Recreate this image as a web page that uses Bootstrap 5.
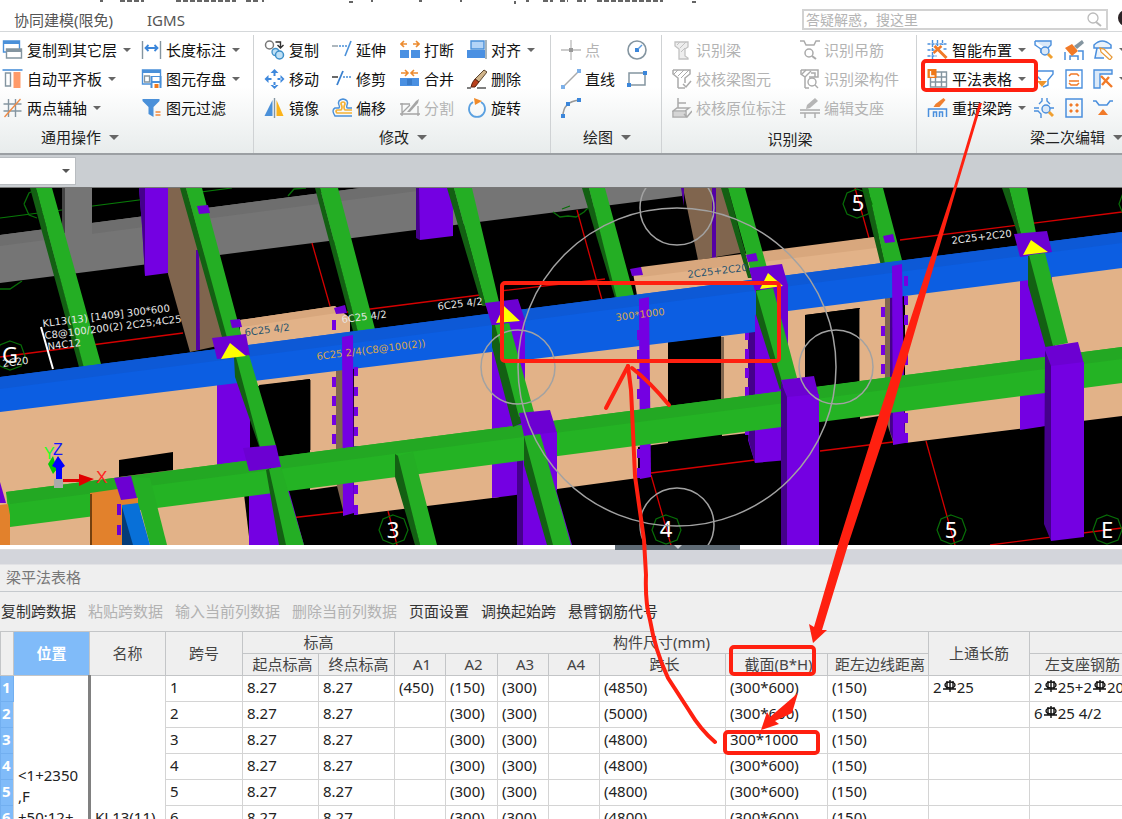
<!DOCTYPE html>
<html lang="zh-CN">
<head>
<meta charset="utf-8">
<meta name="viewport" content="width=device-width, initial-scale=1">
<title>梁平法表格</title>
<link href="https://cdn.jsdelivr.net/npm/bootstrap@5.3.0/dist/css/bootstrap.min.css" rel="stylesheet">
<style>
body{font-family:"Noto Sans","Noto Sans CJK SC",sans-serif;font-size:15px;line-height:20px;color:#222;background:#fff}
svg{flex:none}
.app{position:relative;height:100vh;overflow:hidden}
.topbar,.ribbon,.optbar,.scene,.grip,.split{flex:none}
.topbar{height:32px;border-bottom:1px solid #d5d8da;padding:4px 14px 0 14px;overflow:hidden}
.topbar nav{gap:34px;padding-top:6px}
.topbar a{color:#555;text-decoration:none}
.titlecut{position:absolute;left:0;top:0;width:100%}
.finder{width:306px;height:21px;border:2px solid #d2d2d2;margin-top:5px}
.finder input{border:0;outline:0;font-size:14px;line-height:16px;color:#888;padding:0 2px;background:none}
.finder input::placeholder{color:#b4b4b4}
.face{position:absolute;right:0;top:8px}
.ribbon{height:123px;background:linear-gradient(#fff 45%,#e8ecec);border-bottom:2px solid #9b9fa3;padding-top:3px;overflow:hidden}
.panelx{border-right:1px solid #cfd2d4}
.panelx:last-child{border:0}
.gridx{display:grid;grid-auto-rows:29px;align-items:center}
.w1{width:254px;padding-left:2px}.w1 .gridx{grid-template-columns:139px 1fr}
.w2{width:297px;padding-left:10px}.w2 .gridx{grid-template-columns:68px 68px 67px 1fr}
.w3{width:111px;padding-left:10px}.w3 .gridx{grid-template-columns:66px 1fr}
.w4{width:255px;padding-left:10px}.w4 .gridx{grid-template-columns:128px 1fr}
.w5{padding-left:10px}.w5 .gridx{grid-template-columns:107px 30px 29px 30px}
.tool{border:0;background:none;padding:0;display:flex;align-items:center;gap:4px;color:#111;white-space:nowrap;text-align:left}
.tool:disabled{color:#b3b3b3}
.cap{height:30px;display:flex;align-items:center;gap:8px;color:#222;border:0;background:none;padding:0;white-space:nowrap}
.w1 .cap{margin-left:39px}
.dd::after{content:"";border:4px solid transparent;border-top-color:#666;border-bottom:0;margin-left:2px}
.cap.dd::after{border-width:5px;border-bottom:0;margin:0}
.optbar{height:33px;background:#caced2;border-bottom:1px solid #777;padding-top:2px}
.combo{width:76px;height:28px;border:1px solid #b8bcc0;border-left:0;border-radius:0;background:#fff;appearance:none}
.combowrap{position:relative;width:76px}
.combowrap::after{content:"";position:absolute;right:6px;top:12px;border:4px solid transparent;border-top-color:#555;border-bottom:0}
.scene{display:block;width:100%;height:auto;background:#000}
.grip{height:5px;background:#fff;border-bottom:1px solid #ddd}
.grip span{display:block;width:125px;height:5px;margin-left:615px;background:#5f6b75}
.grip svg{display:block;margin:auto}
.split{height:15px;background:#d3d5db;border-bottom:1px solid #e2e2e5}
.dock{background:#efefef;flex:1 1 0;min-height:0;overflow:hidden}
.dtitle{height:27px;border-bottom:1px solid #c5c9cd;color:#777;padding:2px 6px}
.dtools{height:39px;padding:0 0 2px 1px;gap:12px}
.dtools button{border:0;background:none;padding:0;color:#333;white-space:nowrap}
.dtools button:disabled{color:#b2b2b2}
.span{table-layout:fixed;width:1131px;border-collapse:collapse;background:#fff}
.span th,.span td{border:1px solid #d4d4d4;padding:0 4px 3px;line-height:20px;white-space:nowrap;overflow:hidden}
.span thead th{height:22px;background:#efefef;border-color:#c3c5c7;font-weight:400;text-align:center;color:#444;padding:0 0 1px}
.span thead tr + tr th{padding:0 0 1px 4px}
.span thead th:nth-child(n).sel{background:#80bbf9;color:#fff;font-weight:700}
.span tbody tr{height:26px}
.span td{color:#222}
.span tbody th{background:#80bbf9;color:#fff;padding:0 1px 3px;font-weight:700;border-color:#72aff0}
.span td.loc{border-right:3px solid #808080;line-height:21px}
.marks{position:absolute;left:0;top:0;width:100%;pointer-events:none}
</style>
</head>
<body>
<svg width="0" height="0" class="position-absolute">
<defs>
<symbol id="copyf" viewBox="0 0 20 20"><path d="M1 1h16v11H1z" fill="#fff" stroke="#4a90d9" stroke-width="1.4"/><path d="M1 1h16v3H1z" fill="#4a90d9"/><path d="M4 9h15v9H4z" fill="#fff" stroke="#8495a0" stroke-width="1.4"/><path d="M4 9h15v3H4z" fill="#8495a0"/></symbol>
<symbol id="slab" viewBox="0 0 20 20"><path d="M0 1h20" stroke="#4a90d9" stroke-width="1.6"/><path d="M3 4h5v13H3z" fill="#fff" stroke="#8495a0" stroke-width="1.4"/><path d="M11 3h7v16h-7z" fill="#ff9b6a"/></symbol>
<symbol id="axis" viewBox="0 0 20 20"><path d="M6 1v18M13 1v18M1 6h18M1 13h18" stroke="#8495a0" stroke-width="1.4"/><path d="M2 19 18 1" stroke="#ef8a45" stroke-width="1.4"/></symbol>
<symbol id="dim" viewBox="0 0 20 20"><path d="M1 1v18M19 1v18" stroke="#8495a0" stroke-width="1.4"/><path d="M4 8h12M7 5 4 8l3 3M13 5l3 3-3 3" fill="none" stroke="#3b86da" stroke-width="1.8"/></symbol>
<symbol id="save" viewBox="0 0 20 20"><path d="M1 1h18v14H1z" fill="#fff" stroke="#4a90d9" stroke-width="1.4"/><path d="M1 1h18v3H1z" fill="#4a90d9"/><path d="M3 7h5v6H3z" fill="none" stroke="#8495a0" stroke-width="1.3"/><path d="M9 7h11v12H9z" fill="#4a90d9"/><path d="M11 8h7v4h-7z" fill="#fff"/><path d="M11 14h7v5h-7z" fill="#fff"/><path d="M13 15h4v4h-4z" fill="#f07a1c"/></symbol>
<symbol id="filt" viewBox="0 0 20 20"><path d="M1 1h17v2l-6 6v10l-5-3V9L1 3z" fill="#4a90d9"/><path d="M14 14h5M14 17h5" stroke="#f58a3c" stroke-width="1.5"/></symbol>
<symbol id="copy" viewBox="0 0 20 20"><circle cx="5" cy="5" r="4" fill="none" stroke="#777" stroke-width="1.5"/><path d="M11 2h5v5M13 5l3 3 3-3" fill="none" stroke="#333" stroke-width="1.4"/><circle cx="11" cy="12" r="3.500" fill="#bfe0f5" stroke="#3d8fc8" stroke-width="1.3"/><circle cx="15" cy="15" r="4" fill="#bfe0f5" stroke="#3d8fc8" stroke-width="1.5"/></symbol>
<symbol id="move" viewBox="0 0 20 20"><path d="M10 0l4 4H6zM10 20l4-4H6zM0 10l4-4v8zM20 10l-4-4v8zM9 3h2v4H9zM9 13h2v4H9zM3 9h4v2H3zM13 9h4v2h-4z" fill="#3f88dc"/></symbol>
<symbol id="mirr" viewBox="0 0 20 20"><path d="M8 2v16H0z" fill="#4a90d9"/><path d="M12 2v16h7z" fill="#fbb31a"/><path d="M10 0v20" stroke="#8495a0" stroke-width="1.4"/></symbol>
<symbol id="ext" viewBox="0 0 20 20"><path d="M0 6h6" stroke="#9aa5ad" stroke-width="1.6"/><path d="M7 6h8" stroke="#4a90d9" stroke-width="1.5" stroke-dasharray="2 1"/><path d="M19 1l-6 15" stroke="#4a90d9" stroke-width="1.6"/></symbol>
<symbol id="trim" viewBox="0 0 20 20"><path d="M0 8h6" stroke="#444" stroke-width="1.6"/><path d="M11 8h9" stroke="#4a90d9" stroke-width="1.5" stroke-dasharray="2 1"/><path d="M11 2 5 16" stroke="#3a80cf" stroke-width="1.8"/></symbol>
<symbol id="offs" viewBox="0 0 20 20"><path d="M20 18H3Q-1 12 3 10h4q1-1 0-3-2-5 4-6 6 1 4 6-1 3 1 3h4" fill="none" stroke="#4a90d9" stroke-width="1.4"/><path d="M20 15H5q-2-2 0-3h4q2-2 0-6 0-2 2-2t2 2q-2 4 0 6h7" fill="none" stroke="#f5b236" stroke-width="1.7"/></symbol>
<symbol id="brk" viewBox="0 0 20 20"><path d="M0 10h9v8H0zM11 10h9v8h-9z" fill="#4a90e2"/><path d="M1 4h6M4 1 1 4l3 3M13 4h6M16 1l3 3-3 3" fill="none" stroke="#ec8b2f" stroke-width="1.6"/></symbol>
<symbol id="join" viewBox="0 0 20 20"><path d="M0 9h19v8H0z" fill="#4a90e2"/><path d="M7 10h5v6H7z" fill="#397bc9"/><path d="M1 4h6M5 1l3 3-3 3M12 4h6M14 1l-3 3 3 3" fill="none" stroke="#ec8b2f" stroke-width="1.6"/></symbol>
<symbol id="cut" viewBox="0 0 20 20"><path d="M0 6h10M2 5v13M0 16h20M18 8v10M2 15l8-8" fill="none" stroke="#a5a5a5" stroke-width="1.3"/><path d="M7 14l9-11 3-2-1 4-8 9z" fill="#a5a5a5"/></symbol>
<symbol id="alig" viewBox="0 0 20 20"><path d="M4 1h13v8H4z" fill="#b3d4f7" stroke="#4a90d9" stroke-width="1.4"/><path d="M0 10h18v8H0z" fill="#4a90e2"/><path d="M19 0v19" stroke="#8495a0" stroke-width="1.4"/></symbol>
<symbol id="dele" viewBox="0 0 20 20"><path d="M8 10 17 1l3 2-8 10z" fill="#d0b48a" stroke="#5c4630"/><path d="M8 10l4 3-4 5H4q1-5 4-8z" fill="#b8401c" stroke="#5a2410"/><path d="M0 19h4M10 19h9" stroke="#555" stroke-width="1.4"/></symbol>
<symbol id="rota" viewBox="0 0 20 20"><path d="M14 4a8 8 0 1 1-8 0" fill="none" stroke="#5aa0e0" stroke-width="1.8"/><path d="M7 0l8 3-7 4z" fill="#f08a28"/></symbol>
<symbol id="dot" viewBox="0 0 20 20"><path d="M10 0v20M0 10h20" stroke="#bbb" stroke-width="1.3"/><path d="M8 8h4v4H8z" fill="#999"/></symbol>
<symbol id="line" viewBox="0 0 20 20"><path d="M3 17 17 3" stroke="#aaa" stroke-width="1.5"/><path d="M0 16h4v4H0zM16 0h4v4h-4z" fill="#7db0e8"/></symbol>
<symbol id="arc" viewBox="0 0 20 20"><path d="M2 18Q2 4 18 2" fill="none" stroke="#999" stroke-width="1.5"/><path d="M0 16h4v4H0zM16 0h4v4h-4zM5 4h4v4H5z" fill="#3b86da"/></symbol>
<symbol id="circ" viewBox="0 0 20 20"><circle cx="10" cy="10" r="9" fill="none" stroke="#8495a0" stroke-width="1.6"/><path d="M8 8h4v4H8z" fill="#3b86da"/><path d="M11 9l4-4" stroke="#5b9be0" stroke-width="1.4"/></symbol>
<symbol id="rect" viewBox="0 0 20 20"><path d="M2 4h16v12H2z" fill="none" stroke="#8495a0" stroke-width="1.5"/><path d="M0 14h4v4H0zM16 2h4v4h-4z" fill="#3b86da"/></symbol>
<symbol id="gbeam" viewBox="0 0 20 20"><path d="M3 2h13v5l-3 2v7l3 2v1H7V9L3 6z" fill="#eee" stroke="#c2c2c2" stroke-width="1.3"/><path d="M5 5l3-3M8 8l6-6M9 12l4-4" stroke="#c2c2c2"/></symbol>
<symbol id="gchk" viewBox="0 0 20 20"><path d="M1 1h17v4l-5 4v5M6 19V9L1 5V1M6 19h7" fill="none" stroke="#aaa" stroke-width="1.5"/><path d="M2 5l4-4M6 7l6-6M9 9l8-8" stroke="#aaa"/><path d="M11 15l3 3 5-6" fill="none" stroke="#aaa" stroke-width="1.5"/></symbol>
<symbol id="gorg" viewBox="0 0 20 20"><path d="M6 0v10M6 5h8M1 13l4-3h12l-4 3zM1 13v6h13v-6" fill="none" stroke="#aaa" stroke-width="1.5"/><path d="M2 14h11v4H2z" fill="#d5d5d5"/><path d="M12 16l3 3 5-6" fill="none" stroke="#aaa" stroke-width="1.5"/></symbol>
<symbol id="ghang" viewBox="0 0 20 20"><path d="M0 1h4l2 4h8l2-4h4" fill="none" stroke="#aaa" stroke-width="1.5"/><circle cx="9" cy="13" r="4" fill="none" stroke="#aaa" stroke-width="1.5"/><path d="M12 16l4 3" stroke="#aaa" stroke-width="2"/></symbol>
<symbol id="gcomp" viewBox="0 0 20 20"><path d="M1 1h17v7H9M5 19V8L1 5V1M5 19h4M11 4h4v4" fill="none" stroke="#aaa" stroke-width="1.5"/><circle cx="12" cy="13" r="4" fill="none" stroke="#aaa" stroke-width="1.4"/><path d="M15 16l3 3M2 5l4-4M5 8l6-6" stroke="#aaa" stroke-width="1.4"/></symbol>
<symbol id="gsupp" viewBox="0 0 20 20"><path d="M0 12h20M0 15h20M5 15v5M15 15v5" stroke="#aaa" stroke-width="1.4"/><path d="M6 11l1-4 8-7 3 3-8 7z" fill="#b5b5b5"/></symbol>
<symbol id="smart" viewBox="0 0 20 20"><path d="M5 0v19M10 0v6M15 0v5M0 4h20M0 10h7M0 16h9M16 9h4" stroke="#4a8fdd" stroke-width="1.4" stroke-dasharray="3 1"/><path d="M7 6l12 12" stroke="#f17a28" stroke-width="3"/><path d="M6 13l8-7" stroke="#f17a28" stroke-width="2.500"/></symbol>
<symbol id="tabl" viewBox="0 0 20 20"><path d="M3 3h16v15H3zM3 8h16M3 13h16M8 3v15M14 3v15" fill="none" stroke="#8495a0" stroke-width="1.4"/><path d="M0 0h9v9H0z" fill="#ef7a1a"/><path d="M3 2v5h4" fill="none" stroke="#fff" stroke-width="1.3"/></symbol>
<symbol id="span" viewBox="0 0 20 20"><path d="M1 19v-8h18v8M6 19v-5h3v5M12 19v-5h3v5" fill="none" stroke="#4a8fdd" stroke-width="1.5"/><path d="M6 9l2-3 8-6 2 2-6 7z" fill="#f08030"/></symbol>
<symbol id="bsee" viewBox="0 0 20 20"><path d="M1 1h16v4l-4 4M7 13V9L1 5V1" fill="#dbe9f8" stroke="#4a8fdd" stroke-width="1.4"/><circle cx="11" cy="11" r="4" fill="#dbe9f8" stroke="#4a8fdd" stroke-width="1.4"/><path d="M14 14l4 4" stroke="#f0a030" stroke-width="3"/></symbol>
<symbol id="brush" viewBox="0 0 20 20"><path d="M1 20v-8M6 20v-4h8v4M19 20v-9h-5" fill="none" stroke="#4a8fdd" stroke-width="1.5"/><path d="M1 8l7-4 6 7-6 5z" fill="#f17a28"/><path d="M10 6l8-6 2 3-7 6z" fill="#8495a0"/></symbol>
<symbol id="helm" viewBox="0 0 20 20"><path d="M1 5q8-8 17 0v3H1zM4 8l-2 10h9" fill="#eaf3fc" stroke="#4a8fdd" stroke-width="1.5"/><path d="M7 8l4 1 8 8-2 3-9-8z" fill="#fff" stroke="#e79b3c" stroke-width="1.3"/></symbol>
<symbol id="bchk" viewBox="0 0 20 20"><path d="M2 2h17v3l-5 6v5l-5 2M2 2v4l5 5" fill="none" stroke="#4a8fdd" stroke-width="1.4"/><path d="M3 12h10l-5 6z" fill="#f0962c"/></symbol>
<symbol id="frm" viewBox="0 0 20 20"><path d="M2 1h16v18H2z" fill="none" stroke="#4a8fdd" stroke-width="1.4"/><path d="M5 7l2-2h6l2 2M5 12h10M5 14l2 2h6l2-2" fill="none" stroke="#f17a28" stroke-width="1.5"/></symbol>
<symbol id="corn" viewBox="0 0 20 20"><path d="M1 1h18v4H7v14H1z" fill="#dbe9f8" stroke="#4a8fdd" stroke-width="1.4"/><path d="M8 7l11 11M9 16l7-8" stroke="#f17a28" stroke-width="2.400"/></symbol>
<symbol id="node" viewBox="0 0 20 20"><path d="M8 0v3L5 6M13 0v3l3 3M0 10h5M0 13h4l3 3v4M16 10h4" fill="none" stroke="#4a8fdd" stroke-width="1.4"/><circle cx="12" cy="11" r="4" fill="#dbe9f8" stroke="#4a8fdd" stroke-width="1.4"/><path d="M15 14l4 4" stroke="#f0a030" stroke-width="3"/></symbol>
<symbol id="four" viewBox="0 0 20 20"><path d="M2 1h16v18H2z" fill="none" stroke="#4a8fdd" stroke-width="1.5"/><path d="M6 6h2v2H6zM12 6h2v2h-2zM6 12h2v2H6zM12 12h2v2h-2z" fill="#f17a28" stroke="#f17a28"/></symbol>
<symbol id="bar" viewBox="0 0 20 20"><path d="M0 3h3l3 4h8l3-4h3" fill="none" stroke="#4a8fdd" stroke-width="1.6"/><path d="M10 11l5 6H5z" fill="#f17a28"/></symbol>
<symbol id="rebar" viewBox="0 0 15 14"><ellipse cx="8" cy="6" rx="5" ry="3" fill="none" stroke="#111" stroke-width="1.4"/><path d="M5 2v8M8 1v12M11 2v8M1 10h13" stroke="#111" stroke-width="1.400"/></symbol>
</defs>
</svg>

<div class="app d-flex flex-column">
  <header class="topbar d-flex justify-content-between">
    <svg class="titlecut" viewBox="0 0 1122 4" aria-hidden="true"><path d="M100 1h3M120 1h24M176 1h60M246 1h12M262 1h2M349 2h4M371 1h2M419 1h3M460 1h2M515 1v3M526 1h3M543 1h10M560 1h8M577 1h9M597 1h66M692 2h4" stroke="#333" stroke-width="1.5" stroke-dasharray="5 2"/></svg>
    <nav class="d-flex"><a href="#">协同建模(限免)</a><a href="#">IGMS</a></nav>
    <div class="finder d-flex align-items-center pe-1"><input class="flex-grow-1" type="text" aria-label="搜索" placeholder="答疑解惑，搜这里"><svg width="15" height="15" viewBox="0 0 15 15"><circle cx="6" cy="6" r="5" fill="none" stroke="#bbb" stroke-width="1.3"/><path d="M9 10l5 4" stroke="#bbb" stroke-width="2"/></svg></div>
    <svg class="face" width="4" height="20"><circle cx="8" cy="10" r="8" fill="#2b2326"/></svg>
  </header>

  <section class="ribbon d-flex">
    <div class="panelx w1 flex-shrink-0">
      <div class="gridx">
        <button class="tool dd"><svg width="21" height="20"><use href="#copyf"/></svg>复制到其它层</button>
        <button class="tool dd"><svg width="21" height="20"><use href="#dim"/></svg>长度标注</button>
        <button class="tool dd"><svg width="21" height="20"><use href="#slab"/></svg>自动平齐板</button>
        <button class="tool dd"><svg width="21" height="20"><use href="#save"/></svg>图元存盘</button>
        <button class="tool dd"><svg width="21" height="20"><use href="#axis"/></svg>两点辅轴</button>
        <button class="tool"><svg width="21" height="20"><use href="#filt"/></svg>图元过滤</button>
      </div>
      <button class="cap dd">通用操作</button>
    </div>
    <div class="panelx w2 flex-shrink-0">
      <div class="gridx">
        <button class="tool"><svg width="21" height="20"><use href="#copy"/></svg>复制</button>
        <button class="tool"><svg width="20" height="20"><use href="#ext"/></svg>延伸</button>
        <button class="tool"><svg width="20" height="20"><use href="#brk"/></svg>打断</button>
        <button class="tool dd"><svg width="20" height="20"><use href="#alig"/></svg>对齐</button>
        <button class="tool"><svg width="21" height="20"><use href="#move"/></svg>移动</button>
        <button class="tool"><svg width="20" height="20"><use href="#trim"/></svg>修剪</button>
        <button class="tool"><svg width="20" height="20"><use href="#join"/></svg>合并</button>
        <button class="tool"><svg width="20" height="20"><use href="#dele"/></svg>删除</button>
        <button class="tool"><svg width="21" height="20"><use href="#mirr"/></svg>镜像</button>
        <button class="tool"><svg width="20" height="20"><use href="#offs"/></svg>偏移</button>
        <button class="tool" disabled><svg width="20" height="20"><use href="#cut"/></svg>分割</button>
        <button class="tool"><svg width="20" height="20"><use href="#rota"/></svg>旋转</button>
      </div>
      <button class="cap dd mx-auto pe-2">修改</button>
    </div>
    <div class="panelx w3 flex-shrink-0">
      <div class="gridx">
        <button class="tool" disabled><svg width="20" height="20"><use href="#dot"/></svg>点</button>
        <button class="tool" aria-label="圆"><svg width="20" height="20"><use href="#circ"/></svg></button>
        <button class="tool"><svg width="20" height="20"><use href="#line"/></svg>直线</button>
        <button class="tool" aria-label="矩形"><svg width="20" height="20"><use href="#rect"/></svg></button>
        <button class="tool" aria-label="弧线"><svg width="20" height="20"><use href="#arc"/></svg></button>
      </div>
      <button class="cap dd mx-auto pe-2">绘图</button>
    </div>
    <div class="panelx w4 flex-shrink-0">
      <div class="gridx">
        <button class="tool" disabled><svg width="20" height="20"><use href="#gbeam"/></svg>识别梁</button>
        <button class="tool" disabled><svg width="20" height="20"><use href="#ghang"/></svg>识别吊筋</button>
        <button class="tool" disabled><svg width="20" height="20"><use href="#gchk"/></svg>校核梁图元</button>
        <button class="tool" disabled><svg width="20" height="20"><use href="#gcomp"/></svg>识别梁构件</button>
        <button class="tool" disabled><svg width="20" height="20"><use href="#gorg"/></svg>校核原位标注</button>
        <button class="tool" disabled><svg width="20" height="20"><use href="#gsupp"/></svg>编辑支座</button>
      </div>
      <div class="cap justify-content-center pt-1 pe-2">识别梁</div>
    </div>
    <div class="panelx w5 flex-grow-1">
      <div class="gridx">
        <button class="tool dd"><svg width="21" height="20"><use href="#smart"/></svg>智能布置</button>
        <button class="tool" aria-label="查看"><svg width="20" height="20"><use href="#bsee"/></svg></button>
        <button class="tool" aria-label="刷新"><svg width="20" height="20"><use href="#brush"/></svg></button>
        <button class="tool dd" aria-label="编辑"><svg width="20" height="20"><use href="#helm"/></svg></button>
        <button class="tool dd"><svg width="21" height="20"><use href="#tabl"/></svg>平法表格</button>
        <button class="tool" aria-label="校核"><svg width="20" height="20"><use href="#bchk"/></svg></button>
        <button class="tool" aria-label="箍筋"><svg width="20" height="20"><use href="#frm"/></svg></button>
        <button class="tool dd" aria-label="加腋"><svg width="20" height="20"><use href="#corn"/></svg></button>
        <button class="tool dd"><svg width="21" height="20"><use href="#span"/></svg>重提梁跨</button>
        <button class="tool" aria-label="节点"><svg width="20" height="20"><use href="#node"/></svg></button>
        <button class="tool" aria-label="截面"><svg width="20" height="20"><use href="#four"/></svg></button>
        <button class="tool" aria-label="吊筋"><svg width="20" height="20"><use href="#bar"/></svg></button>
      </div>
      <button class="cap dd ms-auto">梁二次编辑</button>
    </div>
  </section>

  <div class="optbar"><div class="combowrap"><select class="combo" aria-label="楼层"><option></option></select></div></div>

  <svg class="scene" viewBox="0 188 1122 357" role="img" aria-label="三维梁模型">
    <path d="M0 218 232 188" fill="none" stroke="#087a08" stroke-width="1.2"/>
    <path d="M0 235 360 188H682V196L0 283z" fill="#757575"/>
    <path d="M0 235 360 188H440L0 246z" fill="#6e6e6e"/>
    <path d="M65 188H92V250H65z" fill="#757575"/><path d="M62 188h3v45h-3z" fill="#444"/>
    <g fill="none" stroke="#086e08" stroke-width="1.3">
      <path d="M24 204l5-11 10-5M24 204l5 11 8 3M0 289l10 0 12-8M288 196l6-7 12-1M553 212l7 5 8-1 8 1 8-5 4-4M562 209l8-3"/>
    </g>
    <g stroke="#d40000" stroke-width="1.3" fill="none">
      <path d="M0 357 183 333M347 312 480 295M500 291 605 279M900 240 1122 212M290 518 343 512M651 473 755 460M820 451 893 442M990 545 1122 528M312 243 330 306M577 210 602 300M855 188 869 238M651 475 671 545M388 511 397 545M926 441 955 545"/>
    </g>
    <!-- far columns and walls -->
    <path d="M139 188H168V273L145 276 142 225z" fill="#7400e2"/><path d="M139 188h6v88l-3-50z" fill="#45008c"/>
    <path d="M168 188H190L222 335V345L190 352 168 274z" fill="#80654e"/><path d="M196 250h3l1 100h-4z" fill="#5400a4"/>
    <path d="M416 188H453V236L420 240z" fill="#7400e2"/><path d="M416 188h3l1 52-4-2z" fill="#45008c"/>
    <path d="M683 188H724L745 252 698 260z" fill="#80654e"/><path d="M681 188h3v18zM712 188h4v70h-4z" fill="#5400a4"/>
    <!-- back walls above the blue beam -->
    <path d="M240 320 335 306 350 318V345L240 360z" fill="#e2b288"/><path d="M240 320 335 306 337 313 242 327z" fill="#d8a77d"/>
    <path d="M633 273 882 236 886 275 640 312z" fill="#e2b288"/><path d="M641 267 882 236 884 247 641 277z" fill="#d8a77d"/>
    <!-- walls below -->
    <path d="M0 400 230 375 250 545H0z" fill="#e2b288"/>
    <path d="M243 375 345 360V485L310 490V379L258 386z" fill="#e2b288"/>
    <path d="M354 360 500 345V497L354 515z" fill="#e2b288"/>
    <path d="M525 350 668 335V443L638 447V478L557 489 525 440z" fill="#e2b288"/>
    <path d="M721 330 748 327V433L722 436z" fill="#e2b288"/>
    <path d="M780 310 892 295V414L860 419V308L805 315V380H780z" fill="#e2b288"/>
    <path d="M905 290 1122 260V416L905 443z" fill="#e2b288"/>
    <path d="M721 337h3v62h-3zM309 380h2v70h-2zM857 309h3v75h-3z" fill="#80654e"/>
    <!-- purple columns -->
    <g fill="#7400e2">
      <path d="M217 357H250V465H217zM249 465 281 462 304 545H249z"/>
      <path d="M492 320H525V420H550L557 433V490L523 494 492 498z"/><path d="M517 455 540 434 572 545H517z"/>
      <path d="M748 300H788V460L755 463 748 440z"/><path d="M1020 250H1052V425L1020 430z"/>
    </g>
    <path d="M748 332h7v131l-7-25zM517 455l6 5v85h-6z" fill="#45008c"/>
    <path d="M336 360h7v150l-7-28zM885 295h8v147l-8-25z" fill="#80654e"/>
    <path d="M890 295h3v145l-3-8z" fill="#45008c"/>
    <path d="M334 320V450M883 307V385M747 330V440" stroke="#7400e2" stroke-width="4" stroke-dasharray="10 9"/>
    <!-- upper green beams -->
    <g fill="#136013">
      <path d="M30 188h6L84 366l-5 1zM180 188h6l42 149h-6zM315 188h5l38 143h-5zM447 188h7l32 118h-4zM582 188h7l29 110h-3zM721 188h7l24 90h-4zM862 188h6l18 78h-5zM1002 188h7l13 50h-3z"/>
    </g>
    <g fill="#24ae24">
      <path d="M36 188H52L101 364 84 368zM186 188H202L244 345 229 345zM320 188H338L376 333 359 336zM454 188H472L500 306 486 306zM589 188H605L636 303 618 303zM728 188H745L769 275 752 275zM868 188H883L903 264 886 268zM1009 188H1027L1037 238 1022 238z"/>
    </g>
    <path d="M197 206l11-1 2 8-11 1zM230 320l10-1 2 8-10 1zM334 308l11-3 2 8-11 1zM630 269l11-2 2 8-11 1zM746 255l10-2 2 8-10 1zM883 236l10-2 2 8-10 1z" fill="#6c00d2"/>
    <!-- main blue beam -->
    <path d="M0 377 1122 232V268L788 311 755 315V332L525 360V348L0 412z" fill="#0c5ee2"/>
    <path d="M0 377 1122 232V243L0 389z" fill="#0d59d6"/>
    <g fill="#7400e2">
      <path d="M342 337l11-2 1 178-11 3z"/><path d="M354 367h4v9h-4zM354 387h4v9h-4zM354 407h4v9h-4zM354 427h4v9h-4zM354 446h4v9h-4zM354 485h4v9h-4zM354 505h4v10h-4z"/>
      <path d="M639 299l10-2 2 180-11 2z"/><path d="M637 330h4v10h-4zM637 350h4v9h-4zM637 369h4v10h-4zM637 389h4v10h-4zM637 449h4v9h-4zM637 468h4v10h-4z"/>
      <path d="M892 266l10-2 3 179-12 2z"/><path d="M904 276h4v10h-4zM904 296h4v9h-4zM904 315h4v10h-4zM904 355h4v10h-4zM904 413h4v10h-4zM904 433h4v10h-4z"/>
    </g>
    <!-- lower green beam -->
    <path d="M6 492 1122 347V383L10 527z" fill="#24b324"/><path d="M6 492 1122 347V359L10 504z" fill="#23a823"/>
    <path d="M119 460 173 452V470L119 477z" fill="#000"/>
    <!-- black openings -->
    <path d="M259 385 310 379V450L278 455z"/><path d="M668 343 721 337V398L668 405zM805 315 859 308V381L805 388z"/>
    <!-- caps and front beams -->
    <g fill="#6c00d2"><path d="M212 338 246 334 250 356 217 359zM485 303 518 299 525 320 492 326zM749 268 782 264 788 285V378L775 350 755 291zM1014 234 1047 231 1052 252 1020 257z"/></g>
    <path d="M509 323 525 320V385z" fill="#7400e2"/>
    <g fill="#136013"><path d="M234 357h4l36 90-14 2-25-72zM492 325h6l24 98-9 4-21-80zM756 290h4l25 92-5 8-24-75zM1028 256h4l23 90-9 3-18-64z"/></g>
    <g fill="#24ae24"><path d="M236 357 249 355 276 446 260 447zM495 325 509 323 534 412 519 417zM756 291 773 288 797 378 782 382zM1029 255 1045 253 1068 343 1053 346z"/></g>
    <g fill="#6c00d2"><path d="M243 448 276 445 281 467 249 471zM519 413 550 410 557 433 524 436zM781 380 814 376 819 397 787 399zM1045 347 1078 342 1084 364 1051 368z"/></g>
    <path d="M540 434 557 432V492z" fill="#7400e2"/>
    <path d="M787 397 819 394V545H787zM1051 366 1084 362V537L1051 541z" fill="#7400e2"/>
    <path d="M781 382l6 15v148h-6zM1045 350l6 16v175l-7-17z" fill="#45008c"/>
    <g fill="#136013"><path d="M266 470 271 468 288 545H279zM524 436l6 4 25 105h-8l-23-80zM395 454l5 3 20 88h-5l-20-68z"/></g>
    <g fill="#24ae24"><path d="M269 469 281 467 304 545H286zM524 436 540 434 571 545H553zM398 456 413 452 437 545H420z"/><path d="M132 477 150 478 167 545H150z"/></g>
    <!-- left end -->
    <path d="M0 482 6 503H0z" fill="#6c00d2"/><path d="M0 505 8 504 10 515V545H0zM90 493 118 489 138 498V504L122 506V545H90z" fill="#e2812c"/><path d="M90 494h2v51h-2z" fill="#74400f"/>
    <path d="M114 478 131 476 137 498 121 500z" fill="#6c00d2"/><path d="M117 504h4v11h-4zM117 525h4v10h-4z" fill="#6c00d2"/>
    <path d="M122 505 138 503 150 545H122z" fill="#0870d8"/><path d="M122 507 133 545H122z" fill="#043c78"/>
    <!-- support marks -->
    <path d="M230 343 246 356 221 359zM504 306 520 321 496 323zM768 273 783 286 760 289zM1031 240 1048 252 1023 255z" fill="#ff0"/>
    <g fill="none" stroke="#086e08" stroke-width="1.2">
      <path id="oct" d="M857 189l11 4 4 11-4 10-11 4-10-4-4-10 4-11z"/>
      <use href="#oct" x="-464" y="326"/><use href="#oct" x="-191" y="326"/><use href="#oct" x="94" y="326"/><use href="#oct" x="250" y="326"/><use href="#oct" x="-847" y="152"/><use href="#oct" x="276" y="0"/>
    </g>
    <g fill="#fff" font-size="22" text-anchor="middle"><text x="858" y="211">5</text><text x="393" y="538">3</text><text x="666" y="537">4</text><text x="951" y="538">5</text><text x="1107" y="538">E</text><text x="10" y="363">G</text></g>
    <path d="M41 327 53 369" stroke="#fff" stroke-width="2"/>
    <g font-family="DejaVu Sans" font-size="10">
      <g fill="#e8e8e8"><text transform="translate(43 327) rotate(-7)">KL13(13) [1409] 300*600</text><text transform="translate(45 339) rotate(-7)">C8@100/200(2) 2C25;4C25</text><text transform="translate(48 350) rotate(-7)">N4C12</text><text transform="translate(3 367) rotate(-7)">2C20</text><text transform="translate(342 323) rotate(-7)">6C25 4/2</text><text transform="translate(438 310) rotate(-7)">6C25 4/2</text><text transform="translate(952 244) rotate(-7)">2C25+2C20</text></g>
      <g fill="#28536e"><text transform="translate(245 336) rotate(-7)">6C25 4/2</text><text transform="translate(688 278) rotate(-7)">2C25+2C20</text></g>
      <g fill="#d8a74c"><text transform="translate(317 360) rotate(-7)">6C25 2/4(C8@100(2))</text><text transform="translate(616 321) rotate(-7)">300*1000</text></g>
    </g>
    <!-- axis tripod -->
    <path d="M48 464l5-8 4 13-4 5z" fill="#0c0"/><path d="M58 456l7 10-3 2v13h-6v-13l-4-2z" fill="#00f"/><path d="M62 479h17v-5l15 5-15 7v-4H62z" fill="#e00000"/><path d="M54 479h9v9h-9z" fill="#aaa"/>
    <text x="44" y="459" font-size="16" font-family="Liberation Sans" fill="#2f2">Y</text><text x="53" y="455" font-size="16" font-family="Liberation Sans" fill="#1515ff">Z</text><text x="96" y="483" font-size="17" font-family="Liberation Sans" fill="#f22">X</text>
    <g fill="none" stroke="#a2a2a2" stroke-width="1.5"><circle cx="677" cy="367" r="159"/><circle cx="677" cy="208" r="37"/><circle cx="677" cy="525" r="37"/><circle cx="518" cy="367" r="37"/><circle cx="836" cy="367" r="37"/></g>
  </svg>

  <div class="grip"><span><svg width="8" height="5"><path d="M0 0h8L4 4z" fill="#ccd0d4"/></svg></span></div>
  <div class="split"></div>
  <section class="dock">
    <div class="dtitle">梁平法表格</div>
    <div class="dtools d-flex align-items-center">
      <button>复制跨数据</button><button disabled>粘贴跨数据</button><button disabled>输入当前列数据</button><button disabled>删除当前列数据</button><button>页面设置</button><button>调换起始跨</button><button>悬臂钢筋代号</button>
    </div>
    <table class="span">
      <colgroup><col style="width:13px"><col style="width:76px"><col style="width:76px"><col style="width:77px"><col style="width:76px"><col style="width:76px"><col style="width:51px"><col style="width:52px"><col style="width:51px"><col style="width:51px"><col style="width:126px"><col style="width:102px"><col style="width:101px"><col style="width:101px"><col style="width:102px"></colgroup>
      <thead>
        <tr><th rowspan="2"></th><th rowspan="2" class="sel">位置</th><th rowspan="2">名称</th><th rowspan="2">跨号</th><th colspan="2">标高</th><th colspan="7">构件尺寸(mm)</th><th rowspan="2">上通长筋</th><th></th></tr>
        <tr><th>起点标高</th><th>终点标高</th><th>A1</th><th>A2</th><th>A3</th><th>A4</th><th>跨长</th><th>截面(B*H)</th><th>距左边线距离</th><th>左支座钢筋</th></tr>
      </thead>
      <tbody id="rows"></tbody>
    </table>
  </section>

  <svg class="marks" viewBox="0 0 1122 819" aria-hidden="true">
    <g fill="none" stroke="#ff2010" stroke-width="4" stroke-linejoin="round" stroke-linecap="round">
      <rect x="923" y="61" width="113" height="29" rx="3"/><rect x="502" y="283" width="277" height="78" rx="3"/><rect x="731" y="647" width="83" height="27" rx="3"/><rect x="725" y="732" width="93" height="21" rx="3"/>
      <path d="M715 742Q700 729 690 712L668 678Q655 650 650 620 645 602 646 575L644 540 635 476 632 410 631 390 628 366"/><path d="M606 408 628 366M632 368Q650 382 669 405"/>
    </g>
    <path d="M979 103h3L956 190 886 430 848 545 822 630 827 630 813 643 809 624 814 627 838 545 874 430 953 190zM798 693 792 713 775 721 779 724 761 730 767 712 770 717z" fill="#ff2010"/>
  </svg>
</div>

<script src="https://cdn.jsdelivr.net/npm/bootstrap@5.3.0/dist/js/bootstrap.bundle.min.js"></script>
<script>
const bar = '<svg width="15" height="14" class="align-baseline"><use href="#rebar"/></svg>';
const lengths = [4850, 5000, 4800, 4800, 4800, 4800, 4800, 4800, 4800, 4800, 4800];
document.getElementById('rows').innerHTML = lengths.map((len, i) => {
  const cells = [i + 1, '8.27', '8.27', i ? '' : '(450)', i ? '(300)' : '(150)', '(300)', '', `(${len})`,
    i === 2 ? '300*1000' : '(300*600)', '(150)', i ? '' : `2${bar}25`,
    i === 0 ? `2${bar}25+2${bar}20` : i === 1 ? `6${bar}25 4/2` : ''];
  const merged = i ? '' : '<td class="loc" rowspan="11">&lt;1+2350<br>,F<br>+50;12+<br>2350<br>,F</td><td rowspan="11">KL13(11)</td>';
  return `<tr><th>${i + 1}</th>${merged}${cells.map(c => `<td>${c}</td>`).join('')}</tr>`;
}).join('');
</script>
</body>
</html>
